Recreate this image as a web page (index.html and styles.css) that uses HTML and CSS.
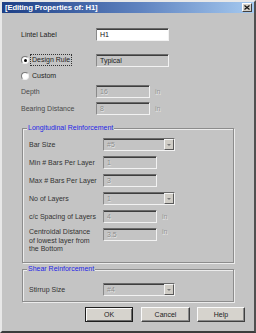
FILE: index.html
```html
<!DOCTYPE html>
<html lang="en">
<head>
    <meta charset="UTF-8">
    <title>Editing Properties of: H1</title>
    <link rel="stylesheet" href="styles.css">
</head>
<body>
<div class="window">
    <div class="titlebar">
        <span class="title">[Editing Properties of: H1]</span>
        <span class="close">
            <svg width="6" height="5" viewBox="0 0 6 5"><path d="M0.5 0.5 L5.5 4.5 M5.5 0.5 L0.5 4.5" stroke="#111" stroke-width="1.2"/></svg>
        </span>
    </div>

    <div class="content">
        <div class="row r-lintel">
            <span class="label">Lintel Label</span>
            <div class="field wide">H1</div>
        </div>

        <div class="row r-design">
            <span class="radio-wrap">
                <span class="radio checked"></span>
                <span class="focus">Design Rule</span>
            </span>
            <div class="field wide readonly">Typical</div>
        </div>

        <div class="row r-custom">
            <span class="radio"></span>
            <span class="radio-text">Custom</span>
        </div>

        <div class="row r-depth">
            <span class="label muted">Depth</span>
            <div class="field short disabled">16</div>
            <span class="unit">in</span>
        </div>

        <div class="row r-bearing">
            <span class="label muted">Bearing Distance</span>
            <div class="field short disabled">8</div>
            <span class="unit">in</span>
        </div>

        <div class="group g-long">
            <span class="group-title">Longitudinal Reinforcement</span>

            <div class="row g-row first">
                <span class="glabel">Bar Size</span>
                <div class="field select disabled"><span>#5</span><span class="dd"><i></i></span></div>
            </div>
            <div class="row g-row">
                <span class="glabel">Min # Bars Per Layer</span>
                <div class="field short disabled">1</div>
            </div>
            <div class="row g-row">
                <span class="glabel">Max # Bars Per Layer</span>
                <div class="field short disabled">3</div>
            </div>
            <div class="row g-row">
                <span class="glabel">No of Layers</span>
                <div class="field select disabled"><span>1</span><span class="dd"><i></i></span></div>
            </div>
            <div class="row g-row">
                <span class="glabel">c/c Spacing of Layers</span>
                <div class="field short disabled">4</div>
                <span class="unit">in</span>
            </div>
            <div class="row g-row tall">
                <span class="glabel multi">Centroidal Distance<br>of lowest layer from<br>the Bottom</span>
                <div class="field short disabled">3.5</div>
                <span class="unit">in</span>
            </div>
        </div>

        <div class="group g-shear">
            <span class="group-title">Shear Reinforcement</span>
            <div class="row g-row first">
                <span class="glabel">Stirrup Size</span>
                <div class="field select disabled"><span>#4</span><span class="dd"><i></i></span></div>
            </div>
        </div>

        <div class="buttons">
            <button class="btn default">OK</button>
            <button class="btn">Cancel</button>
            <button class="btn">Help</button>
        </div>
    </div>
</div>
</body>
</html>
```

FILE: styles.css
```css
/* Dialog shell */
* {
    box-sizing: border-box;
}

body {
    margin: 0;
    font-family: "Liberation Sans", Arial, sans-serif;
    font-size: 7px;
    color: #1e1e1e;
    background: #c4c4c4;
}

.window {
    width: 256px;
    height: 333px;
    background: #c4c4c4;
    border-left: 2px solid #e8e8e8;
    border-top: 2px solid #e8e8e8;
    border-right: 2px solid #505050;
    border-bottom: 2px solid #3c3c3c;
    display: flex;
    flex-direction: column;
}

/* Title bar */
.titlebar {
    height: 11px;
    flex: none;
    background: linear-gradient(to right, #1d3f86, #5f83c0 55%, #a6caf0);
    display: flex;
    align-items: center;
    justify-content: space-between;
    padding: 0 2px 0 3px;
}

.title {
    color: #fff;
    font-weight: bold;
    font-size: 7.7px;
    letter-spacing: -0.1px;
}

.close {
    width: 10px;
    height: 9px;
    background: #d4d0c8;
    border: 1px solid;
    border-color: #fff #404040 #404040 #fff;
    display: flex;
    align-items: center;
    justify-content: center;
}

/* Form body */
.content {
    flex: 1;
    padding: 0 9px 0 19px;
    display: flex;
    flex-direction: column;
}

.row {
    display: flex;
    align-items: center;
    height: 13px;
    flex: none;
}

.r-lintel { margin-top: 15px; }
.r-design { margin-top: 12px; height: 14px; }
.r-custom { margin-top: 3px; height: 11px; }
.r-depth { margin-top: 4px; }
.r-bearing { margin-top: 4px; }

.label {
    width: 75px;
    flex: none;
}

.muted {
    color: #4a4a4a;
}

/* Radios */
.radio-wrap {
    width: 75px;
    flex: none;
    display: flex;
    align-items: center;
}

.radio {
    width: 8px;
    height: 8px;
    flex: none;
    border-radius: 50%;
    border: 1px solid;
    border-color: #7a7a7a #f0f0f0 #f0f0f0 #7a7a7a;
    background: #fff;
    display: flex;
    align-items: center;
    justify-content: center;
    margin-right: 1px;
}

.radio.checked::after {
    content: "";
    width: 3px;
    height: 3px;
    border-radius: 50%;
    background: #000;
}

.focus {
    border: 1px dotted #333;
    padding: 0 1px;
    line-height: 10px;
}

.radio-text {
    padding-left: 2px;
}

/* Edit boxes */
.field {
    height: 13px;
    flex: none;
    border: 1px solid;
    border-color: #6a6a6a #f2f2f2 #f2f2f2 #8a8a8a;
    box-shadow: inset 0 1px 0 #3e3e3e;
    background: #fff;
    padding-left: 3px;
    line-height: 11px;
    color: #111;
}

.field.readonly {
    background: #c4c4c4;
    color: #222;
}

.field.disabled {
    background: #c4c4c4;
    color: #8e8e8e;
    text-shadow: 0.5px 0.5px 0 #e4e4e4;
}

.wide { width: 73px; }
.short { width: 54px; }

.select {
    width: 72px;
    display: flex;
    justify-content: space-between;
    padding-right: 0;
}

.dd {
    width: 10px;
    height: 11px;
    background: #d0cdc6;
    border: 1px solid;
    border-color: #f4f4f4 #5a5a5a #5a5a5a #f4f4f4;
    display: flex;
    align-items: center;
    justify-content: center;
}

.dd i {
    width: 0;
    height: 0;
    border-left: 2px solid transparent;
    border-right: 2px solid transparent;
    border-top: 2px solid #7a7a7a;
}

.unit {
    margin-left: 5px;
    color: #959595;
    text-shadow: 0.5px 0.5px 0 #ececec;
}

/* Group boxes */
.group {
    flex: none;
    width: 212px;
    margin-left: 1px;
    border: 1px solid #8c8c8c;
    box-shadow: inset 1px 1px 0 #ececec, 1px 1px 0 #ececec;
    display: flex;
    flex-direction: column;
    padding-left: 6px;
}

.g-long {
    margin-top: 13px;
    height: 135px;
}

.g-shear {
    margin-top: 6px;
    height: 33px;
}

.group-title {
    align-self: flex-start;
    margin: -5px 0 0 -2px;
    padding: 0 1px;
    height: 8px;
    line-height: 8px;
    color: #2424e6;
    background: #c4c4c4;
}

.g-row { margin-top: 5px; }
.g-long .g-row.first { margin-top: 6px; }
.g-shear .g-row.first { margin-top: 10px; }

.g-row.tall {
    height: 26px;
    align-items: flex-start;
}

.glabel {
    width: 74px;
    flex: none;
    color: #333;
}

.glabel.multi {
    line-height: 8.5px;
}

/* Buttons */
.buttons {
    display: flex;
    justify-content: flex-end;
    margin-top: 5px;
}

.btn {
    font-family: "Liberation Sans", Arial, sans-serif;
    font-size: 7px;
    color: #222;
    width: 48px;
    height: 15px;
    padding: 0;
    margin-left: 8px;
    background: #d6d3cd;
    border: 1px solid;
    border-color: #fafafa #404040 #404040 #fafafa;
    box-shadow: inset -1px -1px 0 #8a8a8a;
}

.btn:nth-child(2) {
    width: 49px;
}

.btn:last-child {
    margin-left: 7px;
}

.btn.default {
    border-color: #1e1e1e;
    box-shadow: inset 1px 1px 0 #fafafa, inset -1px -1px 0 #6a6a6a;
}
```
